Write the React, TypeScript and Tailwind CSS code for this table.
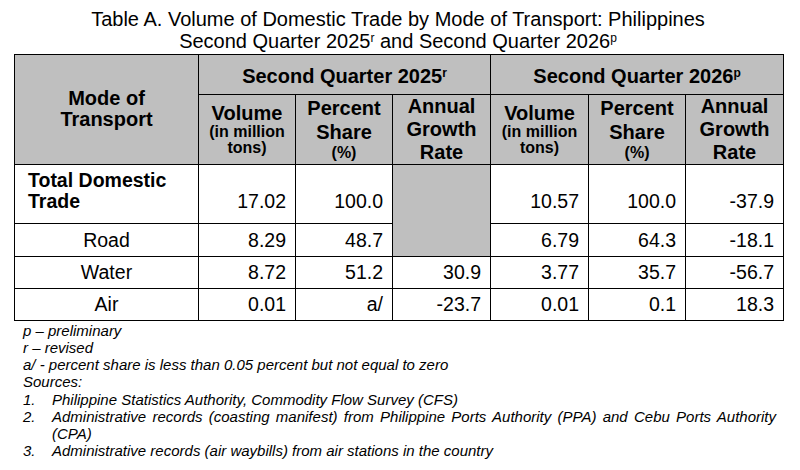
export default function App() {
  const thBase = "border border-black bg-[#bfbfbf] font-bold text-center align-middle p-0";
  const num = "border border-black text-right pr-[9px] pl-0 text-[19.5px] leading-[22px]";
  const rows = [
    { label: "Road", v: ["8.29", "48.7", null, "6.79", "64.3", "-18.1"], h: "h-[33px]" },
    { label: "Water", v: ["8.72", "51.2", "30.9", "3.77", "35.7", "-56.7"], h: "h-[32px]" },
    { label: "Air", v: ["0.01", "a/", "-23.7", "0.01", "0.1", "18.3"], h: "h-[32px]" },
  ];
  const sub = (a: string, b: string, c: string, small: boolean, idx: number) =>
    small ? (
      <th key={idx} className={thBase}>
        <div className="flex flex-col items-center">
          <span className="text-[20px] leading-[22px]">{a}</span>
          <span className="text-[16px] leading-[16px]">{b}</span>
          <span className="text-[16px] leading-[16px]">{c}</span>
        </div>
      </th>
    ) : c === "(%)" ? (
      <th key={idx} className={thBase}>
        <div className="flex flex-col items-center">
          <span className="text-[20px] leading-[24px]">{a}</span>
          <span className="text-[20px] leading-[24px]">{b}</span>
          <span className="text-[16px] leading-[18px]">{c}</span>
        </div>
      </th>
    ) : (
      <th key={idx} className={thBase}>
        <div className="flex flex-col items-center">
          <span className="text-[20px] leading-[23px]">{a}</span>
          <span className="text-[20px] leading-[23px]">{b}</span>
          <span className="text-[20px] leading-[23px]">{c}</span>
        </div>
      </th>
    );
  const group = (k: number) => [
    sub("Volume", "(in million", "tons)", true, k),
    sub("Percent", "Share", "(%)", false, k + 1),
    sub("Annual", "Growth", "Rate", false, k + 2),
  ];
  return (
    <div className="w-[800px] h-[470px] bg-white text-black font-['Liberation_Sans',Arial,sans-serif] overflow-hidden">
      <div className="pt-[9px] ml-[14px] w-[768px] text-center text-[20px] leading-[21.6px]">
        <div>Table A. Volume of Domestic Trade by Mode of Transport: Philippines</div>
        <div>
          Second Quarter 2025<sup className="text-[12px]">r</sup> and Second Quarter 2026
          <sup className="text-[12px]">p</sup>
        </div>
      </div>
      <table className="mt-[1.5px] ml-[14px] w-[769px] table-fixed border-collapse">
        <colgroup>
          <col className="w-[184px]" />
          <col className="w-[97px]" />
          <col className="w-[97px]" />
          <col className="w-[98px]" />
          <col className="w-[98px]" />
          <col className="w-[97px]" />
          <col className="w-[98px]" />
        </colgroup>
        <thead>
          <tr className="h-[40px]">
            <th rowSpan={2} className={thBase + " text-[20px] leading-[21px]"}>
              Mode of
              <br />
              Transport
            </th>
            <th colSpan={3} className={thBase + " text-[20px] leading-[22px] pt-[3px]"}>
              Second Quarter 2025<sup className="text-[12px]">r</sup>
            </th>
            <th colSpan={3} className={thBase + " text-[20px] leading-[22px] pt-[3px]"}>
              Second Quarter 2026<sup className="text-[12px]">p</sup>
            </th>
          </tr>
          <tr className="h-[70px]">{[...group(0), ...group(3)]}</tr>
        </thead>
        <tbody>
          <tr className="h-[59px]">
            <td className="border border-black align-bottom pl-[13px] pb-[11px] text-left font-bold text-[19.5px] leading-[21px]">
              Total Domestic
              <br />
              Trade
            </td>
            <td className={num + " align-bottom pb-[11px]"}>17.02</td>
            <td className={num + " align-bottom pb-[11px]"}>100.0</td>
            <td rowSpan={2} className="border border-black bg-[#bfbfbf]"></td>
            <td className={num + " align-bottom pb-[11px]"}>10.57</td>
            <td className={num + " align-bottom pb-[11px]"}>100.0</td>
            <td className={num + " align-bottom pb-[11px]"}>-37.9</td>
          </tr>
          {rows.map((r) => (
            <tr key={r.label} className={r.h}>
              <td className="border border-black text-center text-[19.5px] leading-[22px] align-middle">
                {r.label}
              </td>
              {r.v.map((x, i) =>
                x === null ? null : (
                  <td key={i} className={num + " align-middle"}>
                    {x}
                  </td>
                )
              )}
            </tr>
          ))}
        </tbody>
      </table>
      <div className="ml-[23px] w-[753px] text-[15px] leading-[17.2px] italic pt-[1px]">
        <div>p – preliminary</div>
        <div>r – revised</div>
        <div>a/ - percent share is less than 0.05 percent but not equal to zero</div>
        <div>Sources:</div>
        <div className="flex">
          <span className="w-[29px] shrink-0">1.</span>
          <span className="flex-1 text-justify">Philippine Statistics Authority, Commodity Flow Survey (CFS)</span>
        </div>
        <div className="flex">
          <span className="w-[29px] shrink-0">2.</span>
          <span className="flex-1 text-justify">
            Administrative records (coasting manifest) from Philippine Ports Authority (PPA) and Cebu Ports
            Authority (CPA)
          </span>
        </div>
        <div className="flex">
          <span className="w-[29px] shrink-0">3.</span>
          <span className="flex-1 text-justify">Administrative records (air waybills) from air stations in the country</span>
        </div>
      </div>
    </div>
  );
}
